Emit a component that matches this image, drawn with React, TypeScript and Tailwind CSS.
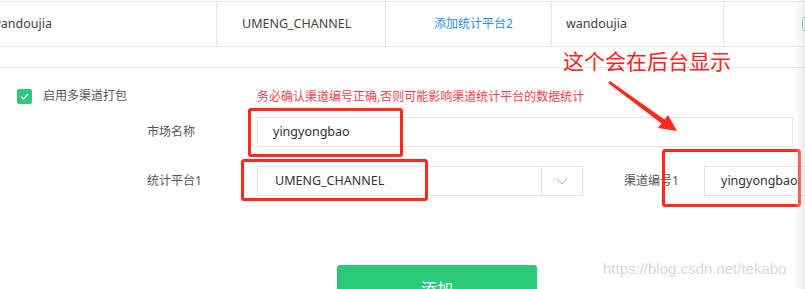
import React from 'react';

const FONT = '"Noto Sans", "Noto Sans CJK SC", sans-serif';

const RED = '#fe2a1d';

const App: React.FC = () => {
  return (
    <div
      className="relative w-[805px] h-[289px] overflow-hidden bg-white text-[#444]"
      style={{ fontFamily: FONT }}
    >
      {/* Fila de la tabla superior */}
      <div className="mt-[1px] flex h-[46px] border-y border-[#e6e6e6] text-[12.5px]">
        <div className="flex w-[217px] shrink-0 items-center border-r border-[#e6e6e6]">
          <span className="-ml-[9px]">wandoujia</span>
        </div>
        <div className="flex w-[169px] shrink-0 items-center border-r border-[#e6e6e6] pl-[25px]">
          <span>UMENG_CHANNEL</span>
        </div>
        <div className="flex w-[166px] shrink-0 items-center border-r border-[#e6e6e6] pl-[48px] text-[12px] text-[#2d8cf0]">
          <span>添加统计平台2</span>
        </div>
        <div className="flex w-[172px] shrink-0 items-center border-r border-[#e6e6e6] pl-[14px]">
          <span>wandoujia</span>
        </div>
        <div className="flex flex-1 items-center pl-[78px]">
          <span className="size-[14px] shrink-0 rounded-[2px] border border-[#2dc97a]" />
        </div>
      </div>

      {/* Separador */}
      <div className="h-[21px] border-b border-[#e6e6e6]" />

      {/* Casilla de varios canales */}
      <div className="mt-[20px] flex h-[16px] items-center">
        <div className="flex w-[257px] shrink-0 items-center pl-[17px]">
          <span className="flex size-[15px] items-center justify-center rounded-[2px] bg-[#2dc97a]">
            <svg width="9" height="7" viewBox="0 0 9 7" fill="none">
              <path d="M1 3.5L3.5 6L8 1" stroke="white" strokeWidth="1.3" />
            </svg>
          </span>
          <span className="ml-[11px] text-[12px] text-[#555]">启用多渠道打包</span>
        </div>
        <span className="pt-[2px] text-[12px] text-[#fb3f4f]">
          务必确认渠道编号正确,否则可能影响渠道统计平台的数据统计
        </span>
      </div>

      {/* Nombre del mercado */}
      <div className="mt-[13px] flex h-[30px] items-center">
        <span className="w-[257px] shrink-0 pl-[147px] text-[12px] text-[#555]">市场名称</span>
        <div className="flex h-full w-[536px] shrink-0 items-center border border-[#e4e4e4] pl-[15px] text-[12.5px] text-[#333]">
          yingyongbao
        </div>
      </div>

      {/* Plataforma y código de canal */}
      <div className="mt-[19px] flex h-[30px] items-center">
        <span className="w-[257px] shrink-0 pl-[147px] text-[12px] text-[#555]">统计平台1</span>
        <div className="flex h-full w-[326px] shrink-0 border border-[#e4e4e4] text-[12.5px] text-[#333]">
          <div className="flex flex-1 items-center pl-[17px]">UMENG_CHANNEL</div>
          <div className="flex w-[41px] items-center justify-center border-l border-[#e4e4e4]">
            <svg width="12" height="7" viewBox="0 0 12 7" fill="none">
              <path d="M1 1L6 6L11 1" stroke="#b5b5b5" strokeWidth="1" />
            </svg>
          </div>
        </div>
        <span className="ml-[41px] w-[80px] shrink-0 text-[12px] text-[#555]">渠道编号1</span>
        <div className="flex h-full w-[120px] shrink-0 items-center border border-[#e4e4e4] pl-[16px] text-[12.5px] text-[#333]">
          yingyongbao
        </div>
      </div>

      {/* Botón añadir */}
      <div className="mt-[69px] flex pl-[337px]">
        <button className="h-[40px] w-[200px] rounded-[3px] bg-[#2bc97a] pt-[8px] text-[16px] leading-none text-white">
          添加
        </button>
      </div>

      {/* Anotaciones rojas */}
      <div
        className="absolute left-[248px] top-[108px] h-[49px] w-[155px] rounded-[3px] border-[3px]"
        style={{ borderColor: RED }}
      />
      <div
        className="absolute left-[241px] top-[159px] h-[42px] w-[187px] rounded-[3px] border-[3px]"
        style={{ borderColor: RED }}
      />
      <div
        className="absolute left-[662px] top-[149px] h-[58px] w-[139px] rounded-[3px] border-[3px]"
        style={{ borderColor: RED }}
      />
      <span className="absolute left-[563px] top-[46px] text-[21px] leading-[30px] text-[#ff2020]">
        这个会在后台显示
      </span>
      <svg className="absolute left-0 top-0" width="805" height="289" viewBox="0 0 805 289">
        <polygon
          points="608,83 610,81 664.5,119.5 668,115 677,131 658,128 661.5,123.5"
          fill={RED}
        />
      </svg>

      {/* Marca de agua */}
      <span
        className="absolute left-[603px] top-[259px] text-[15px] leading-[20px] text-[#d9d9d9]"
        style={{ fontFamily: '"Liberation Sans", Arial, sans-serif' }}
      >
        https://blog.csdn.net/tekabo
      </span>

      {/* Sombra del borde derecho */}
      <div className="absolute right-0 top-0 h-full w-[10px] bg-gradient-to-r from-transparent to-[#e2e2e2]/70" />
    </div>
  );
};

export default App;
